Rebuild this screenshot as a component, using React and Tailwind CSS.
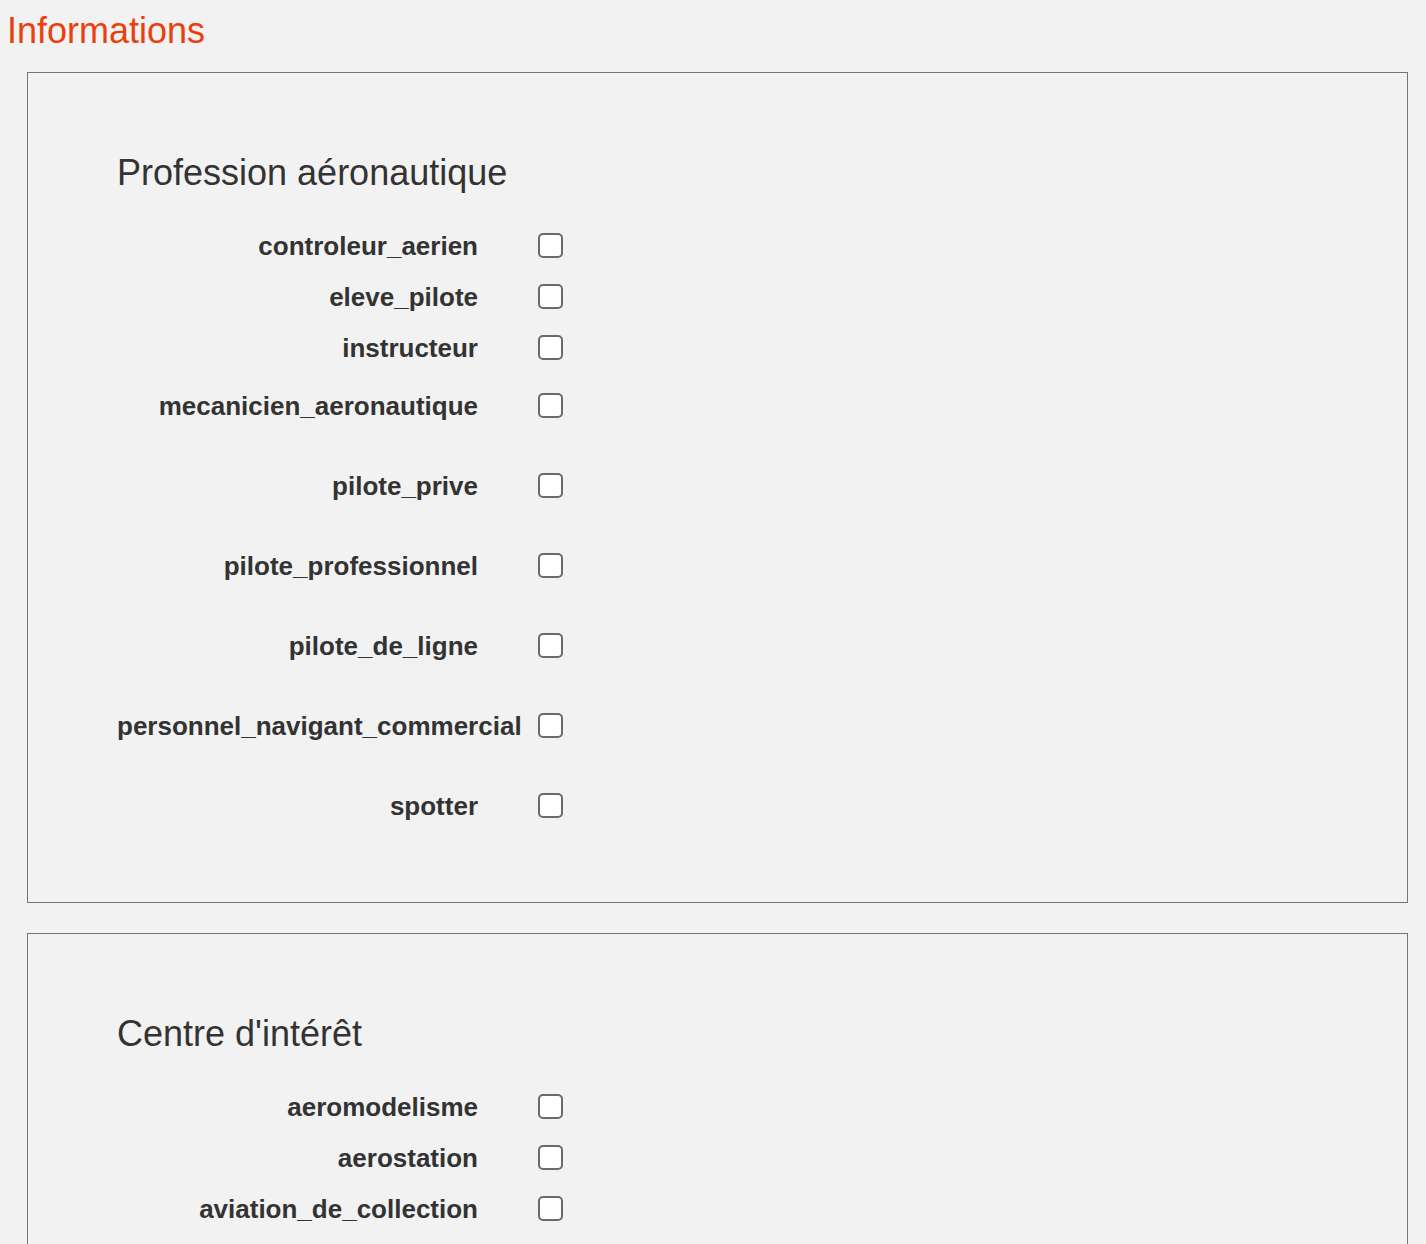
import React from "react";

const sections = [
  {
    title: "Profession aéronautique",
    items: [
      { name: "controleur_aerien", mt: "" },
      { name: "eleve_pilote", mt: "" },
      { name: "instructeur", mt: "" },
      { name: "mecanicien_aeronautique", mt: "mt-[7px]" },
      { name: "pilote_prive", mt: "mt-[29px]" },
      { name: "pilote_professionnel", mt: "mt-[29px]" },
      { name: "pilote_de_ligne", mt: "mt-[29px]" },
      { name: "personnel_navigant_commercial", mt: "mt-[29px]" },
      { name: "spotter", mt: "mt-[29px]" },
    ],
  },
  {
    title: "Centre d'intérêt",
    items: [
      { name: "aeromodelisme", mt: "" },
      { name: "aerostation", mt: "" },
      { name: "aviation_de_collection", mt: "" },
    ],
  },
];

function Row({ name, mt }) {
  return (
    <div className={`flex items-center h-[51px] ${mt}`}>
      <label className="block w-[361px] shrink-0 text-right whitespace-nowrap text-[26px] leading-[30px] font-bold text-[#333333]">
        {name}
      </label>
      <input
        type="checkbox"
        className="appearance-none ml-[60px] w-[25px] h-[25px] border-2 border-[#6a6a6a] rounded-[5px] bg-white shrink-0"
      />
    </div>
  );
}

export default function App() {
  return (
    <div className="h-[1244px] overflow-hidden bg-[#f2f2f2] font-['Liberation_Sans',Arial,Helvetica,sans-serif]">
      <div className="pt-[11px] pl-[7px] text-[36px] leading-[40px] text-[#e8410e]">
        Informations
      </div>
      <div className="mt-[21px] flex flex-col gap-[30px]">
        {sections.map((s, i) => (
          <div
            key={i}
            className="ml-[27px] mr-[18px] border border-[#767676] pl-[89px] pt-[80px] pb-[71px]"
          >
            <div className="text-[36px] leading-[40px] text-[#333333] mb-[27px]">
              {s.title}
            </div>
            {s.items.map((it) => (
              <Row key={it.name} name={it.name} mt={it.mt} />
            ))}
          </div>
        ))}
      </div>
    </div>
  );
}
